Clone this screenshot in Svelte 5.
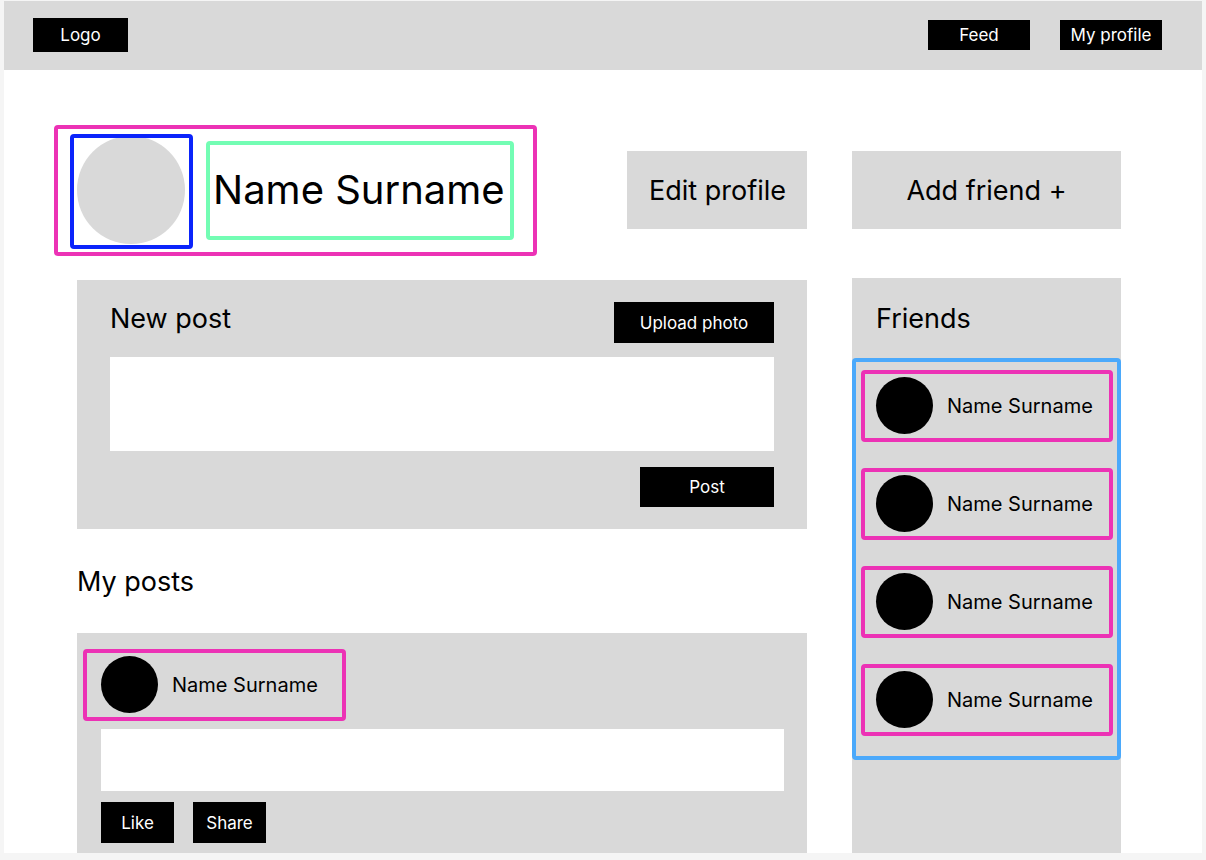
<script>
  const friends = ['Name Surname', 'Name Surname', 'Name Surname', 'Name Surname'];
  let draft = $state('');
</script>

{#snippet person(name)}
  <div class="person">
    <span class="avatar"></span>
    <span>{name}</span>
  </div>
{/snippet}

<div class="page">
  <header>
    <a class="solid logo" href="#home">Logo</a>
    <nav>
      <a class="solid" href="#feed">Feed</a>
      <a class="solid" href="#profile">My profile</a>
    </nav>
  </header>

  <main>
    <div class="content">
      <div class="intro">
        <div class="profile">
          <div class="photo"><span></span></div>
          <h1>Name Surname</h1>
        </div>
        <button class="action edit">Edit profile</button>
      </div>

      <section class="composer">
        <div class="composer-head">
          <h2><label for="draft">New post</label></h2>
          <button class="solid upload">Upload photo</button>
        </div>
        <textarea id="draft" bind:value={draft}></textarea>
        <button class="solid send">Post</button>
      </section>

      <h2 class="posts-title">My posts</h2>

      <article>
        {@render person('Name Surname')}
        <div class="post-body"></div>
        <div class="post-actions">
          <button class="solid">Like</button>
          <button class="solid">Share</button>
        </div>
      </article>
    </div>

    <aside>
      <button class="action">Add friend +</button>
      <section class="friends">
        <h2>Friends</h2>
        <ul>
          {#each friends as friend}
            <li>{@render person(friend)}</li>
          {/each}
        </ul>
      </section>
    </aside>
  </main>
</div>

<style>
  :global(body) {
    margin: 0;
    background: #f5f5f5;
  }

  .page,
  .page * {
    box-sizing: border-box;
  }

  .page {
    display: flex;
    flex-direction: column;
    min-height: calc(100vh - 8px);
    padding: 1px 4px 0;
    background: #fff content-box;
    color: #000;
    font: 400 20px/28px Inter, sans-serif;
  }

  h1,
  h2,
  ul {
    margin: 0;
    padding: 0;
    font-weight: inherit;
    list-style: none;
  }

  h2 {
    font-size: 27px;
    line-height: 34px;
  }

  button {
    border: 0;
    border-radius: 0;
    font-family: inherit;
    font-weight: inherit;
    cursor: pointer;
  }

  .solid {
    display: flex;
    align-items: center;
    justify-content: center;
    height: 40px;
    padding: 0;
    background: #000;
    color: #fff;
    font-size: 17px;
    line-height: 20px;
    text-decoration: none;
  }

  header {
    display: flex;
    align-items: center;
    justify-content: space-between;
    height: 69px;
    padding: 0 40px 1px 29px;
    background: #d9d9d9;
  }

  .logo {
    width: 95px;
    height: 34px;
  }

  nav {
    display: flex;
    gap: 30px;
  }

  nav .solid {
    width: 102px;
    height: 30px;
  }

  main {
    flex: 1;
    display: grid;
    grid-template-columns: minmax(0, 1fr) 269px;
    gap: 45px;
    padding: 55px 81px 0 50px;
  }

  .content {
    display: flex;
    flex-direction: column;
  }

  .intro {
    display: flex;
    align-items: flex-start;
    justify-content: space-between;
    margin-bottom: 24px;
  }

  .profile {
    display: flex;
    align-items: flex-start;
    gap: 13px;
    padding: 5px 19px 3px 12px;
    border: 4px solid #ec32b5;
    border-radius: 4px;
  }

  .photo {
    padding: 2px 8px 5px 7px;
    outline: 4px solid #0b24fb;
    outline-offset: -4px;
    border-radius: 4px;
  }

  .photo span {
    display: block;
    width: 108px;
    height: 108px;
    border-radius: 50%;
    background: #d9d9d9;
  }

  h1 {
    margin-top: 7px;
    padding: 21px 5px 22px 3px;
    border: 4px solid #73fdb4;
    border-radius: 4px;
    font-size: 40px;
    line-height: 48px;
    white-space: nowrap;
  }

  .action {
    height: 78px;
    margin-top: 26px;
    padding: 2px 22px 0;
    background: #d9d9d9;
    color: #000;
    font-size: 27px;
    line-height: 32px;
  }

  .edit {
    width: 180px;
    white-space: nowrap;
  }

  .composer {
    display: flex;
    flex-direction: column;
    margin-left: 23px;
    padding: 22px 33px;
    background: #d9d9d9;
  }

  .composer-head {
    display: flex;
    justify-content: space-between;
    margin-bottom: 14px;
  }

  .upload {
    width: 160px;
    height: 41px;
  }

  textarea {
    display: block;
    height: 94px;
    padding: 12px;
    border: 0;
    border-radius: 0;
    background: #fff;
    font: inherit;
    resize: none;
  }

  .send {
    align-self: flex-end;
    width: 134px;
    margin-top: 16px;
  }

  .posts-title {
    margin: 36px 0 34px 23px;
  }

  article {
    flex: 1;
    margin-left: 23px;
    padding: 16px 23px 10px 24px;
    background: #d9d9d9;
  }

  .person {
    display: flex;
    align-items: flex-start;
    gap: 14px;
    height: 72px;
    padding: 3px 0 0 11px;
    border: 4px solid #ec32b5;
    border-radius: 4px;
    line-height: 58px;
    white-space: nowrap;
  }

  .avatar {
    flex: none;
    width: 57px;
    height: 57px;
    border-radius: 50%;
    background: #000;
  }

  article .person {
    width: 263px;
    margin-left: -18px;
    padding-left: 14px;
  }

  .post-body {
    height: 62px;
    margin: 8px 0 11px;
    background: #fff;
  }

  .post-actions {
    display: flex;
    gap: 19px;
  }

  .post-actions .solid {
    width: 73px;
    height: 41px;
  }

  aside {
    display: flex;
    flex-direction: column;
    gap: 49px;
  }

  .friends {
    flex: 1;
    background: #d9d9d9;
  }

  .friends h2 {
    padding: 24px 24px 22px;
  }

  .friends ul {
    display: grid;
    gap: 26px;
    padding: 8px 4px 20px 5px;
    border: 4px solid #4ba9fb;
    border-radius: 4px;
  }
</style>
